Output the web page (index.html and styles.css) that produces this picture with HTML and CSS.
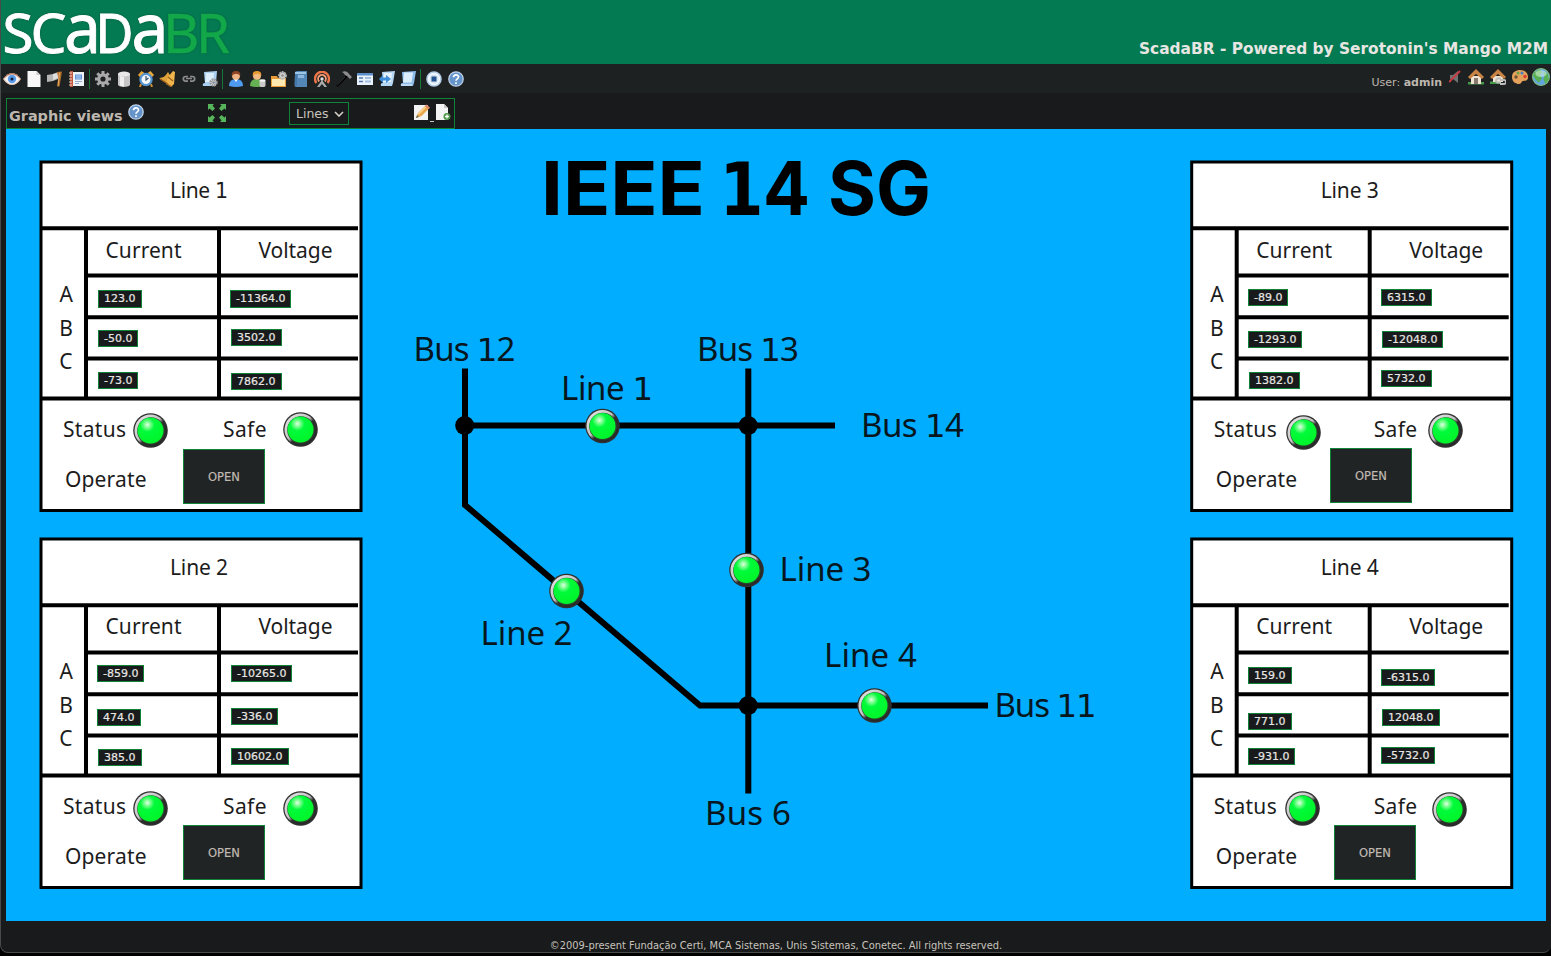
FILE: index.html
```html
<!DOCTYPE html>
<html lang="en">
<head>
<meta charset="utf-8">
<title>ScadaBR</title>
<link rel="stylesheet" href="styles.css">
</head>
<body>
<div class="window">
<header class="banner">
  <svg class="logo" viewBox="0 0 240 64" role="img" aria-label="ScadaBR">
    <g class="logo-white">
      <text x="2.500" y="52.500" font-size="54.500" textLength="31" lengthAdjust="spacingAndGlyphs">S</text>
      <text x="30.500" y="52.500" font-size="54.500" textLength="36" lengthAdjust="spacingAndGlyphs">C</text>
      <text x="64" y="52.500" font-size="70" textLength="37" lengthAdjust="spacingAndGlyphs">a</text>
      <text x="95.500" y="52.500" font-size="54.500" textLength="38" lengthAdjust="spacingAndGlyphs">D</text>
      <text x="131.500" y="52.500" font-size="70" textLength="37" lengthAdjust="spacingAndGlyphs">a</text>
    </g>
    <g class="logo-green">
      <text x="163" y="52.500" font-size="54.500" textLength="36.500" lengthAdjust="spacingAndGlyphs">B</text>
      <text x="196" y="52.500" font-size="54.500" textLength="34" lengthAdjust="spacingAndGlyphs">R</text>
    </g>
  </svg>
  <div class="tagline">ScadaBR - Powered by Serotonin's Mango M2M</div>
</header>

<nav class="toolbar">
  <div class="group">
    <svg class="icon wide" viewBox="0 0 18 16"><path d="M0 8Q4 2 9 2t9 6q-4 6-9 6T0 8z" fill="#e9c9b4"/><path d="M1.500 8Q5 4 9 4t7.500 4q-3.500 5-7.500 5T1.500 8z" fill="#f4f6fb"/><circle cx="9" cy="8" r="4.200" fill="#5c9be8"/><circle cx="9" cy="8" r="1.600" fill="#102444"/><path d="M1 7Q5 2.500 9 2.500T17 7" fill="none" stroke="#b9745a"/></svg>
    <svg class="icon" viewBox="0 0 16 16"><path d="M1.500 0h9L14.500 4v12h-13z" fill="#f7f7f7"/><path d="M10.500 0v4h4z" fill="#c9c9c9"/></svg>
    <svg class="icon" viewBox="0 0 16 16"><path d="M0 4l6-1 5-2v7l-5 2-6 1z" fill="#b5b5b3"/><path d="M6 3l5-1v5L6 9z" fill="#dedede"/><path d="M10 1l5-.500-2.500 15h-2.300l1-9z" fill="#b06d2b"/><path d="M12.500 1.500L11 15" stroke="#e6ae68"/></svg>
    <svg class="icon" viewBox="0 0 16 16"><path d="M1 1h14v14H1z" fill="#eef3fa"/><path d="M1 0h3v16H1z" fill="#c1583e"/><path d="M0 2h3M0 5h3M0 8h3M0 11h3M0 14h3" stroke="#f3d5c7"/><path d="M6 3.500h7v5H6z" fill="#5f91d8"/><path d="M7 5h5M7 7h5" stroke="#d9e8fb" stroke-width=".8"/><path d="M6 10.500h7M6 12.500h4" stroke="#94acd0"/></svg>
  </div>
  <i class="sep"></i>
  <div class="group">
    <svg class="icon" viewBox="0 0 16 16"><g stroke="#a8a8a8" stroke-width="3"><path d="M8 0v4M8 12v4M0 8h4M12 8h4M2.300 2.300l3 3M10.700 10.700l3 3M13.700 2.300l-3 3M5.300 10.700l-3 3"/></g><circle cx="8" cy="8" r="4.200" fill="none" stroke="#aaa" stroke-width="3.200"/></svg>
    <svg class="icon" viewBox="0 0 16 16"><path d="M2 3v10.500C2 16.700 14 16.700 14 13.500V3z" fill="#c6c6c6"/><path d="M4 5v9.700l4 1V6z" fill="#efefef"/><ellipse cx="8" cy="3" rx="6" ry="2.600" fill="#e9e9e9"/></svg>
    <svg class="icon" viewBox="0 0 16 16"><path d="M0 4L3.500 0l3 2L2 6zM16 4L12.500 0l-3 2L14 6z" fill="#eba93a"/><path d="M3 13l-1 3M13 13l1 3" stroke="#cf8e2d" stroke-width="2"/><circle cx="8" cy="8.500" r="5.600" fill="#f2f7fb" stroke="#5594cf" stroke-width="2.200"/><path d="M8 5v4l2.500-2" fill="none" stroke="#344e68" stroke-width="1.200"/></svg>
    <svg class="icon" viewBox="0 0 16 16"><path d="M0 7C5 7 7 4 9 1l5 8c-3 0-5 2-5 4z" fill="#dfa23a"/><path d="M9 6l5-6 2 1-1 12-3 3-5-3z" fill="#efb44b"/><path d="M1 8l8 5M8 13l5 3M9 6l5 4" stroke="#9c611c" stroke-width="1.200"/></svg>
    <svg class="icon" viewBox="0 0 16 16"><path d="M7 5.500H4.600a2.300 2.300 0 0 0 0 4.600H7M9 5.500h2.400a2.300 2.300 0 0 1 0 4.600H9M5 7.500h6" fill="none" stroke="#8b8b8b" stroke-width="1.700"/></svg>
    <svg class="icon" viewBox="0 0 16 16"><path d="M2 1l13-1-1 12-1 3H1q-1-3 2-3z" fill="#a9cff1"/><path d="M4 2h8l-1 9H3z" fill="#dceefc"/><circle cx="11.500" cy="11.500" r="3" fill="#ddd" stroke="#999" stroke-width="2.400" stroke-dasharray="1.700 .7"/><circle cx="11.500" cy="11.500" r="1.300" fill="#789"/></svg>
  </div>
  <i class="sep"></i>
  <div class="group">
    <svg class="icon" viewBox="0 0 16 16"><path d="M1 15Q1 8 8 8t7 7q-7 2-14 0z" fill="#4e9bef"/><path d="M6 8l2 3 2-3z" fill="#fff"/><circle cx="8" cy="4.700" r="4" fill="#eeb184"/><path d="M3.800 5Q3 0 8 0t4.200 5Q10 2 6 3.200z" fill="#8d4424"/></svg>
    <svg class="icon" viewBox="0 0 16 16"><path d="M0 15Q0 8 7 8t7 7q-7 2-14 0z" fill="#65b052"/><circle cx="7" cy="4.700" r="4" fill="#f1b984"/><path d="M2.800 5Q2 0 7 0t4.200 5Q9 2 5 3.200z" fill="#e69b31"/><path d="M9.500 9.500v5c0 2 6 2 6 0v-5z" fill="#cbcbcb"/><ellipse cx="12.500" cy="9.500" rx="3" ry="1.300" fill="#f6f6f6"/></svg>
    <svg class="icon" viewBox="0 0 16 16"><path d="M0 5h6l1 2h8v9H0z" fill="#e89c37"/><path d="M1 8h13v7H1z" fill="#ffe9b2"/><circle cx="11.500" cy="4.500" r="3.300" fill="#d8d8d8" stroke="#b5b5b5" stroke-width="2.200" stroke-dasharray="1.700 .7"/><circle cx="11.500" cy="4.500" r="1.300" fill="#888"/></svg>
    <svg class="icon" viewBox="0 0 16 16"><path d="M2 1q1-1 3-1h9v16H3q-1.500 0-1.500-2z" fill="#5287b8"/><path d="M2 2h11" stroke="#b9dbf2" stroke-width="1.500"/><path d="M5 4h6v3H5z" fill="#8db8dc"/><path d="M3 3v12" stroke="#376a9b"/></svg>
    <svg class="icon" viewBox="0 0 16 16"><g fill="none" stroke="#ec7649" stroke-width="2.400"><path d="M2.400 12A7 7 0 1 1 13.600 12"/><path d="M5.200 10.500a3.900 3.900 0 1 1 5.600 0" stroke="#f19b75" stroke-width="1.900"/></g><circle cx="8" cy="8" r="1.700" fill="#ddd"/><path d="M8 9l5 7h-2.500L8 13l-2.500 3H3z" fill="#aaa"/></svg>
    <svg class="icon" viewBox="0 0 16 16"><path d="M1 15L11 5" stroke="#050505" stroke-width="2.400"/><path d="M1.200 14L9 6" stroke="#454545" stroke-width=".7"/><path d="M6 1q5-2 7 2l3 3-2 2-3-3-2-1Q8 2 6 1z" fill="#8c8c8c"/></svg>
    <svg class="icon" viewBox="0 0 16 16"><path d="M0 2h16v12H0z" fill="#eaf3fc"/><path d="M0 2h16v2.500H0z" fill="#5c8fca"/><path d="M2 7h4M2 10.500h4" stroke="#5379ae" stroke-width="1.500"/><path d="M8 6h6v2H8zM8 9.500h6v2H8z" fill="#a4bfdf"/></svg>
    <svg class="icon" viewBox="0 0 16 16"><path d="M3 1l13-1-2 12-1 3H2q-1-3 2-3z" fill="#b5d7f4"/><path d="M5 2h8l-1 9H4z" fill="#e5f2fd"/><path d="M0 8l4-4v2.500h3V4l5 4-5 4V9.500H4V12z" fill="#3f8edb"/></svg>
    <svg class="icon" viewBox="0 0 16 16"><path d="M2 1l14-1-2 12-1 3H1q-1-3 2-3z" fill="#8dbce9"/><path d="M4 1.500h9l-1.500 10H3z" fill="#dceefc"/><path d="M1 14h11" stroke="#edf7ff"/></svg>
  </div>
  <i class="sep"></i>
  <div class="group">
    <svg class="icon" viewBox="0 0 16 16"><circle cx="8" cy="8" r="7" fill="#f4f9ff" stroke="#b3cdea" stroke-width="1.600"/><circle cx="8" cy="8" r="4.500" fill="#d3e3f4"/><path d="M5.500 5.500h5v5h-5z" fill="#24528e"/></svg>
    <svg class="icon" viewBox="0 0 16 16"><circle cx="8" cy="8" r="7.200" fill="#6594cb" stroke="#bed2e8" stroke-width="1.300"/><path d="M5.500 6.300C5.500 3 10.500 3 10.500 6 10.500 8 8 7.700 8 9.800M8 11.200v1.700" fill="none" stroke="#fff" stroke-width="1.700"/></svg>
  </div>
  <div class="session">
    <span class="user">User: <b>admin</b></span>
    <svg class="icon mute" viewBox="0 0 12 14"><path d="M1 5h3l5-4v12L4 9H1z" fill="#6f7172"/><path d="M0 12L11 1" stroke="#cc3b40" stroke-width="1.800"/></svg>
    <svg class="icon" viewBox="0 0 16 16"><path d="M0 13h16v2.500H0z" fill="#46994a"/><path d="M3 7h10v8H3z" fill="#f0e4d2"/><path d="M0 8L8 0l8 8-2 2L8 5 2 10z" fill="#c98344"/><path d="M6 9h4v6H6z" fill="#84796d"/></svg>
    <svg class="icon" viewBox="0 0 16 16"><path d="M0 12.500h10V15H0z" fill="#46994a"/><path d="M3 7h10v6H3z" fill="#f0e4d2"/><path d="M0 8L8 0l8 8-2 2L8 5 2 10z" fill="#c98344"/><path d="M11 9.500H8a2 2 0 0 0 0 4h3M10 11h4a2 2 0 0 1 0 4h-4" fill="none" stroke="#bbb" stroke-width="1.800"/></svg>
    <svg class="icon" viewBox="0 0 16 16"><path d="M8 1c5 0 8 3 8 7s-3 4-5 4-1 3-4 3-7-2-7-7 4-7 8-7z" fill="#e4a15b"/><circle cx="4" cy="8" r="1.700" fill="#6f5434"/><circle cx="6" cy="4" r="1.500" fill="#64a746"/><circle cx="10" cy="4" r="1.500" fill="#4280cb"/><circle cx="13" cy="7.500" r="1.700" fill="#da3c2c"/></svg>
    <svg class="icon globe" viewBox="0 0 16 16"><circle cx="8" cy="8" r="7.500" fill="#62a4df" stroke="#82bf80"/><path d="M2 4l5-3 2 3-2 2 2 3-3 4-3-3-2-3zM10 3l4 2 1 5-3 4-2-4 1-3z" fill="#58b052"/><ellipse cx="8" cy="5" rx="5" ry="3" fill="#e9fbed" opacity=".5"/></svg>
  </div>
</nav>

<main class="content">
  <section class="viewbar">
    <h1>Graphic views</h1>
    <svg class="icon help" viewBox="0 0 16 16"><circle cx="8" cy="8" r="7.200" fill="#6594cb" stroke="#bed2e8" stroke-width="1.300"/><path d="M5.500 6.300C5.500 3 10.500 3 10.500 6 10.500 8 8 7.700 8 9.800M8 11.200v1.700" fill="none" stroke="#fff" stroke-width="1.700"/></svg>
    <svg class="expand" viewBox="0 0 18 18"><g fill="#57b55b"><path id="arrow" d="M0 0h6L4.500 1.500 7 4.500 4.500 7l-3-2.500L0 6z"/><use href="#arrow" transform="matrix(-1 0 0 1 18 0)"/><use href="#arrow" transform="matrix(1 0 0 -1 0 18)"/><use href="#arrow" transform="rotate(180 9 9)"/></g></svg>
    <div class="select" role="combobox">Lines<svg viewBox="0 0 10 6"><path d="M1 1l4 4 4-4" fill="none" stroke="#d5d0c8" stroke-width="1.600"/></svg></div>
    <div class="actions">
      <svg class="icon" viewBox="0 0 16 16"><path d="M0 1h14v15H0z" fill="#f2f2f2"/><path d="M2 14l2-5 8-8 3.500 3-8 8z" fill="#e9a64b"/><path d="M4.500 10l7-7" stroke="#ffd892" stroke-width="1.500"/><path d="M11 2l1.500-1.500 3.500 3L14.500 5z" fill="#d9826d"/><path d="M2 14l1-3 2 2z" fill="#665"/></svg><i class="underscore"></i><svg class="icon" viewBox="0 0 16 16"><path d="M1 0h8l4 4v12H1z" fill="#f4f4f4"/><path d="M9 0v4h4z" fill="#c8c8c8"/><circle cx="12" cy="12.500" r="3.500" fill="#4b9546"/><path d="M12 10.500v4M10 12.500h4" stroke="#fff" stroke-width="1.300"/></svg>
    </div>
  </section>

  <section class="canvas">
    <svg class="diagram" viewBox="6 129 1540 792">
      <defs>
        <radialGradient id="lamp" cx=".38" cy=".28" r=".65"><stop offset="0" stop-color="#e4ffe8"/><stop offset=".18" stop-color="#7dff90"/><stop offset=".42" stop-color="#00fb3a"/><stop offset="1" stop-color="#00f62c"/></radialGradient>
        <linearGradient id="rim" x1="0" y1="0" x2="1" y2="1"><stop offset="0" stop-color="#e8e8e8"/><stop offset=".46" stop-color="#c4c4c4"/><stop offset=".56" stop-color="#2d2d2d"/><stop offset="1" stop-color="#252525"/></linearGradient>
        <g id="led"><circle r="17.300" fill="#303030"/><circle r="16" fill="url(#rim)"/><circle cx=".4" cy=".4" r="13.700" fill="#2c4a2e"/><circle r="13" fill="url(#lamp)"/></g>
        <g id="frame">
          <path d="M41 162h320v348.500H41z" fill="#fff" stroke="#000" stroke-width="3"/>
          <path d="M41 228.300h317M86 275.500h272M86 317.300h272M86 358.500h272M41 398.500h320" stroke="#000" stroke-width="4"/>
          <path d="M86 228v170M219 228v170" stroke="#000" stroke-width="4"/>
        </g>
      </defs>

      <use href="#frame"/>
      <use href="#frame" y="377"/>
      <use href="#frame" x="1150.700"/>
      <use href="#frame" x="1150.700" y="377"/>

      <g class="panel-text">
        <text x="170" y="198" textLength="58">Line <tspan class="alt">1</tspan></text><text x="105.500" y="257.800" textLength="76">Current</text><text x="258.500" y="257.800" textLength="74">Voltage</text>
        <text x="59.500" y="302">A</text><text x="59.300" y="335.500">B</text><text x="59.300" y="369">C</text>
        <text x="63" y="437" textLength="63">Status</text><text x="223" y="437" textLength="43.500">Safe</text><text x="65" y="486.500" textLength="81.500">Operate</text>
      </g>
      <g class="panel-text" transform="translate(0 377)">
        <text x="170" y="198" textLength="58">Line 2</text><text x="105.500" y="257" textLength="76">Current</text><text x="258.500" y="257" textLength="74">Voltage</text>
        <text x="59.500" y="302">A</text><text x="59.300" y="335.500">B</text><text x="59.300" y="369">C</text>
        <text x="63" y="437" textLength="63">Status</text><text x="223" y="437" textLength="43.500">Safe</text><text x="65" y="486.500" textLength="81.500">Operate</text>
      </g>
      <g class="panel-text" transform="translate(1150.700 0)">
        <text x="170" y="198" textLength="58">Line 3</text><text x="105.500" y="257.800" textLength="76">Current</text><text x="258.500" y="257.800" textLength="74">Voltage</text>
        <text x="59.500" y="302">A</text><text x="59.300" y="335.500">B</text><text x="59.300" y="369">C</text>
        <text x="63" y="437" textLength="63">Status</text><text x="223" y="437" textLength="43.500">Safe</text><text x="65" y="486.500" textLength="81.500">Operate</text>
      </g>
      <g class="panel-text" transform="translate(1150.700 377)">
        <text x="170" y="198" textLength="58">Line 4</text><text x="105.500" y="257" textLength="76">Current</text><text x="258.500" y="257" textLength="74">Voltage</text>
        <text x="59.500" y="302">A</text><text x="59.300" y="335.500">B</text><text x="59.300" y="369">C</text>
        <text x="63" y="437" textLength="63">Status</text><text x="223" y="437" textLength="43.500">Safe</text><text x="65" y="486.500" textLength="81.500">Operate</text>
      </g>

      <g fill="none" stroke="#000" stroke-width="6">
        <path d="M465 368.500V505L700 705.500H988"/>
        <path d="M465 425.500H835"/>
        <path d="M748.300 368.500V793.500"/>
      </g>
      <circle cx="464.700" cy="425.500" r="9.500"/><circle cx="748.200" cy="425.500" r="9.500"/><circle cx="748.200" cy="705.500" r="9.500"/>

      <g class="title">
        <text x="541" y="214.500" textLength="164" lengthAdjust="spacingAndGlyphs">IEEE</text>
        <text x="719.500" y="214.500" textLength="44" lengthAdjust="spacingAndGlyphs" class="alt">1</text>
        <text x="763" y="214.500" textLength="47" lengthAdjust="spacingAndGlyphs">4</text>
        <text x="828" y="214.500" textLength="103" lengthAdjust="spacingAndGlyphs">SG</text>
      </g>
      <g class="net-text">
        <text x="413.500" y="361.300" textLength="102">Bus <tspan class="alt">1</tspan>2</text>
        <text x="697" y="361.300" textLength="102">Bus <tspan class="alt">1</tspan>3</text>
        <text x="861" y="437.300" textLength="103">Bus <tspan class="alt">1</tspan>4</text>
        <text x="994.500" y="716.700" textLength="102">Bus <tspan class="alt">11</tspan></text>
        <text x="705" y="824.500" textLength="86">Bus 6</text>
        <text x="561" y="399.500" textLength="92">Line <tspan class="alt">1</tspan></text>
        <text x="480.500" y="645.300" textLength="92">Line 2</text>
        <text x="779.500" y="581.300" textLength="92">Line 3</text>
        <text x="824" y="667.300" textLength="93">Line 4</text>
      </g>

      <use href="#led" x="150.500" y="430.500"/><use href="#led" x="300.500" y="429.500"/>
      <use href="#led" x="150.500" y="808.500"/><use href="#led" x="300.500" y="808.500"/>
      <use href="#led" x="1303.500" y="432.500"/><use href="#led" x="1445.500" y="430.500"/>
      <use href="#led" x="1302.500" y="808.500"/><use href="#led" x="1449.500" y="809.500"/>
      <use href="#led" x="602.500" y="426"/><use href="#led" x="566.500" y="591"/>
      <use href="#led" x="746.500" y="570"/><use href="#led" x="874.500" y="705.500"/>
    </svg>

    <span class="val l1-ia">123.0</span><span class="val l1-ib">-50.0</span><span class="val l1-ic">-73.0</span>
    <span class="val l1-va">-11364.0</span><span class="val l1-vb">3502.0</span><span class="val l1-vc">7862.0</span>
    <button class="open l1-op">OPEN</button>

    <span class="val l2-ia">-859.0</span><span class="val l2-ib">474.0</span><span class="val l2-ic">385.0</span>
    <span class="val l2-va">-10265.0</span><span class="val l2-vb">-336.0</span><span class="val l2-vc">10602.0</span>
    <button class="open l2-op">OPEN</button>

    <span class="val l3-ia">-89.0</span><span class="val l3-ib">-1293.0</span><span class="val l3-ic">1382.0</span>
    <span class="val l3-va">6315.0</span><span class="val l3-vb">-12048.0</span><span class="val l3-vc">5732.0</span>
    <button class="open l3-op">OPEN</button>

    <span class="val l4-ia">159.0</span><span class="val l4-ib">771.0</span><span class="val l4-ic">-931.0</span>
    <span class="val l4-va">-6315.0</span><span class="val l4-vb">12048.0</span><span class="val l4-vc">-5732.0</span>
    <button class="open l4-op">OPEN</button>
  </section>
</main>
<footer class="footer">©2009-present Fundação Certi, MCA Sistemas, Unis Sistemas, Conetec. All rights reserved.</footer>
</div>
</body>
</html>
```
FILE: styles.css
```css
* { box-sizing: border-box; }
html { background: #000; }
body { margin: 0; height: 956px; overflow: hidden; font-family: "DejaVu Sans", sans-serif; color: #bdb7af; }
.window { height: 953px; display: flex; flex-direction: column; background: #181a1b; border: 1px solid #484b4c; border-top: 0; border-right: 0; border-radius: 0 0 8px 8px; overflow: hidden; }

.banner { height: 64px; flex: none; margin-left: -1px; display: flex; justify-content: space-between; align-items: flex-end; background: #047a52; }
.logo { width: 240px; height: 64px; overflow: visible; font-family: "Noto Sans", sans-serif; filter: drop-shadow(0 0 1px #045c3c); }
.logo-white { fill: #fff; stroke: #fff; stroke-width: .9; }
.logo-green { fill: #12a84a; stroke: #12a84a; stroke-width: .5; }
.tagline { font-size: 15.4px; font-weight: bold; line-height: 18px; color: #e8e6e3; padding: 0 3px 6px 0; white-space: nowrap; }

.toolbar { height: 29px; flex: none; display: flex; align-items: center; padding-left: 3px; background: #1e2122; }
.group { display: flex; gap: 5.5px; align-items: center; }
.icon { width: 16px; height: 16px; display: block; flex: none; }
.icon.wide { width: 18px; margin: 0 -1px; }
.sep { width: 1px; height: 20px; margin: 0 5px 0 4px; background: #12793a; }
.session { margin-left: auto; display: flex; align-items: center; gap: 6px; padding-bottom: 3px; }
.user { font-size: 11px; line-height: 13px; margin: 10px 1px 0 0; white-space: nowrap; }
.icon.mute { width: 12px; height: 14px; margin-right: 1px; }
.icon.globe { width: 18px; height: 18px; margin: 0 1px 0 -2px; }

.content { padding: 5px 5px 0; flex: none; }
.viewbar { width: 449px; height: 31px; display: flex; align-items: center; padding-left: 2px; border: 1px solid #0f8338; }
.viewbar h1 { margin: 4px 0 0; width: 119px; font-size: 14.4px; line-height: 18px; white-space: nowrap; }
.icon.help { margin-bottom: 4px; }
.expand { width: 18px; height: 18px; margin: 0 0 2px 64px; }
.select { width: 60px; height: 23px; margin-left: 63px; padding: 0 4px 0 6px; display: flex; align-items: center; justify-content: space-between; border: 1px solid #0f8338; font-size: 12.500px; color: #c8c3bc; }
.select svg { width: 10px; height: 6px; }
.actions { margin: 0 0 3px 65px; display: flex; align-items: center; }
.underscore { width: 4px; height: 1px; margin: 18px 1px 0 0; background: #c8c3bc; }

.canvas { position: relative; width: 1540px; height: 792px; background: #00adff; }
.diagram { display: block; width: 1540px; height: 792px; font-family: "Noto Sans", sans-serif; }
.panel-text { font-size: 21px; fill: #1c1c1c; }
.net-text { font-size: 33px; fill: #08161e; }
.title { font: bold 74.500px Inter, sans-serif; }
.alt { font-family: "DejaVu Sans", sans-serif; font-size: .98em; }

.val { position: absolute; height: 17px; padding: 0 5px; border: 1px solid #0f8338; background: #181a1b; color: #e8e6e3; font-size: 11px; line-height: 15px; white-space: nowrap; -webkit-text-stroke: .2px #e8e6e3; }
.open { position: absolute; width: 82px; height: 55px; padding: 0; border: 1px solid #0f8338; background: #202425; color: #c0bab1; font: 11.500px "DejaVu Sans", sans-serif; -webkit-text-stroke: .2px #c0bab1; }

.l1-ia { left: 92px; top: 161px; height: 18px; }
.l1-ib { left: 92px; top: 201px; }
.l1-ic { left: 92px; top: 243px; }
.l1-va { left: 224px; top: 161px; height: 18px; }
.l1-vb { left: 225px; top: 200px; }
.l1-vc { left: 225px; top: 244px; }
.l1-op { left: 177px; top: 320px; }
.l2-ia { left: 91px; top: 536px; }
.l2-ib { left: 91px; top: 580px; }
.l2-ic { left: 92px; top: 620px; }
.l2-va { left: 225px; top: 536px; }
.l2-vb { left: 225px; top: 579px; }
.l2-vc { left: 225px; top: 619px; }
.l2-op { left: 177px; top: 696px; }
.l3-ia { left: 1242px; top: 160px; }
.l3-ib { left: 1242px; top: 202px; }
.l3-ic { left: 1243px; top: 243px; }
.l3-va { left: 1375px; top: 160px; }
.l3-vb { left: 1376px; top: 202px; }
.l3-vc { left: 1375px; top: 241px; }
.l3-op { left: 1324px; top: 319px; }
.l4-ia { left: 1242px; top: 538px; }
.l4-ib { left: 1242px; top: 584px; }
.l4-ic { left: 1242px; top: 619px; }
.l4-va { left: 1375px; top: 540px; }
.l4-vb { left: 1376px; top: 580px; }
.l4-vc { left: 1375px; top: 618px; }
.l4-op { left: 1328px; top: 696px; }

.footer { margin-top: 18px; text-align: center; font-size: 9.9px; line-height: 13px; color: #c8c3bc; }
```
